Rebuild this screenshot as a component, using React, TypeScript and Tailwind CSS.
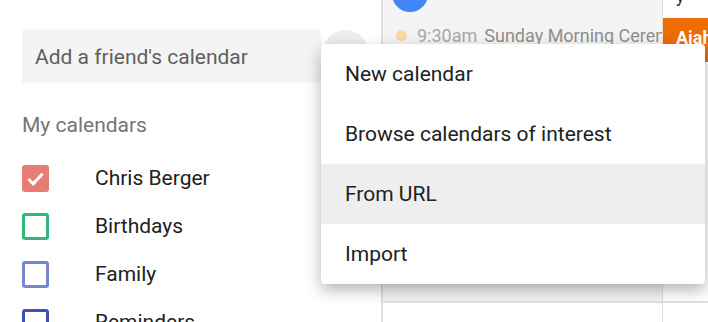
const calendars = [
  { name: "Chris Berger", color: "#e67c73", checked: true },
  { name: "Birthdays", color: "#33b679", checked: false },
  { name: "Family", color: "#7986cb", checked: false },
  { name: "Reminders", color: "#3f51b5", checked: false },
];

const menuItems = [
  { label: "New calendar", active: false },
  { label: "Browse calendars of interest", active: false },
  { label: "From URL", active: true },
  { label: "Import", active: false },
];

function CalendarRow({
  name,
  color,
  checked,
}: {
  name: string;
  color: string;
  checked: boolean;
}) {
  return (
    <div className="flex items-center h-[48px]">
      <div
        className="w-[27px] h-[27px] rounded-[3px] border-[3px] flex items-center justify-center"
        style={{ borderColor: color, background: checked ? color : "transparent" }}
      >
        {checked && (
          <svg width="19" height="19" viewBox="0 0 20 20">
            <path
              d="M2.5 10.5l5 5L17.5 5"
              fill="none"
              stroke="white"
              strokeWidth="3.2"
            />
          </svg>
        )}
      </div>
      <span className="ml-[46px] pt-[2px] text-[21px] text-[#212121]">{name}</span>
    </div>
  );
}

export default function App() {
  return (
    <div className="relative w-[708px] h-[322px] overflow-hidden flex bg-white font-['Roboto',sans-serif]">
      {/* Sidebar */}
      <div className="w-[381px] shrink-0 pl-[22px] pt-[29px]">
        <div className="flex items-start">
          <div className="w-[299px] h-[54px] bg-[#f4f4f4] rounded-t-[3px] pl-[13px] pt-[3px] flex items-center text-[21px] text-[#5f5f5f]">
            Add a friend's calendar
          </div>
          <div className="ml-[2px] mt-[1px] w-[45px] h-[45px] rounded-full bg-[#eeeeee]" />
        </div>

        <div className="mt-[30px] text-[21px] leading-[24px] text-[#757575]">
          My calendars
        </div>

        <div className="mt-[17px]">
          {calendars.map((c) => (
            <CalendarRow key={c.name} {...c} />
          ))}
        </div>
      </div>

      {/* Calendar grid */}
      <div className="flex-1 border-l-2 border-[#e0e0e0] flex flex-col">
        <div className="h-[303px] flex border-b-2 border-[#e0e0e0] shrink-0">
          <div className="w-[280px] bg-[#f4f4f4] border-r-[1px] border-[#e0e0e0] overflow-hidden">
            <div className="ml-[9px] -mt-[24px] w-[36px] h-[36px] rounded-full bg-[#4285f4] flex items-start justify-center text-white text-[18px] font-bold leading-[18px]">
              <span className="mt-[8px]">5</span>
            </div>
            <div className="mt-[13px] h-[20px] flex items-center pl-[13px] pr-[6px] whitespace-nowrap overflow-hidden">
              <span className="w-[11px] h-[11px] rounded-full bg-[#f8daa8] shrink-0" />
              <span className="ml-[10px] text-[18px] text-[#a8a8a8]">9:30am</span>
              <span className="ml-[7px] text-[18px] text-[#8f8f8f]">
                Sunday Morning Ceremony
              </span>
            </div>
          </div>
          <div className="flex-1 overflow-hidden">
            <div className="h-[18px] pl-[13px] text-[18px] leading-[18px] text-[#212121] -mt-[13px]">
              y
            </div>
            <div className="mt-[13px] h-[44px] bg-[#ef6c00] pl-[13px] pt-[6px] text-white font-bold text-[18px] whitespace-nowrap">
              Ajah
            </div>
          </div>
        </div>
        <div className="flex-1 flex">
          <div className="w-[280px] border-r-[1px] border-[#e0e0e0] pl-[14px] pt-[15px] text-[16px] text-[#212121]">
            12
          </div>
          <div className="flex-1 pl-[14px] pt-[15px] text-[16px] text-[#212121]">
            13
          </div>
        </div>
      </div>

      {/* Add calendar menu */}
      <div className="absolute left-[321px] top-[44px] w-[384px] bg-white rounded-[4px] shadow-[0_6px_16px_rgba(0,0,0,0.3)]">
        {menuItems.map((item) => (
          <div
            key={item.label}
            className={
              "h-[60px] flex items-center px-[24px] pt-[2px] text-[21px] text-[#212121] " +
              (item.active ? "bg-[#eeeeee]" : "")
            }
          >
            {item.label}
          </div>
        ))}
      </div>
    </div>
  );
}
